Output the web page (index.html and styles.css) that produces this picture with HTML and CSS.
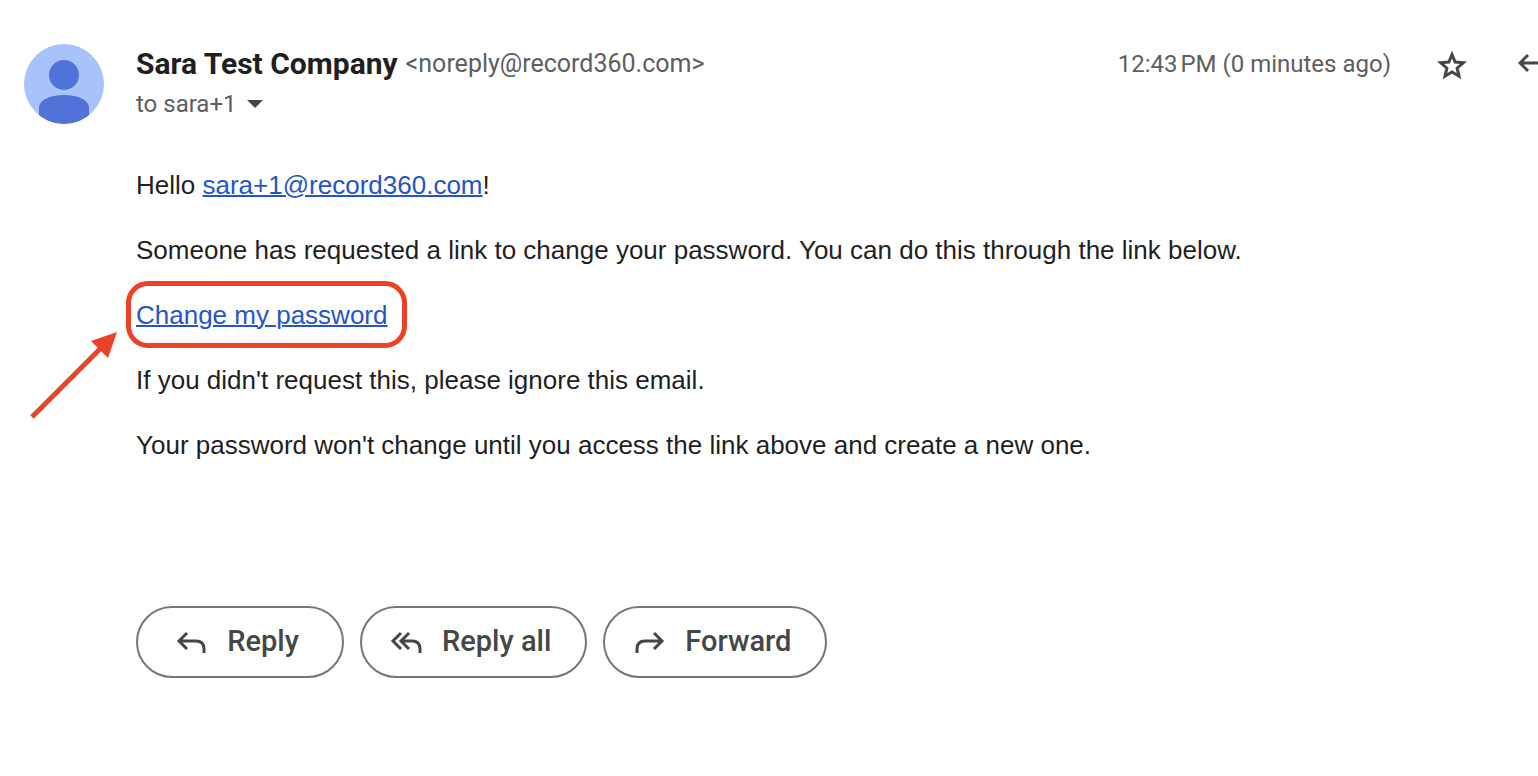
FILE: index.html
```html
<!DOCTYPE html>
<html lang="en">
<head>
<meta charset="UTF-8" />
<meta name="viewport" content="width=device-width, initial-scale=1" />
<title>Change your password</title>
<link rel="stylesheet" href="styles.css">
</head>
<body>
  <article class="message">
    <header class="message-header">
      <svg class="avatar" viewBox="0 0 80 80" aria-hidden="true">
        <clipPath id="avatarClip"><circle cx="40" cy="40" r="40" /></clipPath>
        <g clip-path="url(#avatarClip)">
          <rect width="80" height="80" fill="#a8c3fb" />
          <circle cx="40" cy="31" r="15" fill="#4f73d9" />
          <path d="M15 80V64C15 55 28 51 40 51s25 4 25 13v16z" fill="#4f73d9" />
        </g>
      </svg>
      <div class="sender">
        <div class="sender-line">
          <span class="sender-name">Sara Test Company</span>
          <span class="sender-email">&lt;noreply@record360.com&gt;</span>
        </div>
        <button class="recipient" type="button">
          to sara+1
          <svg class="caret" viewBox="0 0 16 8" aria-hidden="true"><path d="M0 0h16L8 8z" fill="currentColor" /></svg>
        </button>
      </div>
      <div class="meta">
        <time class="time">12:43&#8239;PM (0 minutes ago)</time>
        <button class="icon-btn" type="button" aria-label="Star">
          <svg class="icon" viewBox="0 0 36 36"><path fill="none" stroke="currentColor" stroke-width="3" d="M18 6.500L21.100 14.100L29.300 14.800L23.100 20.200L25 28.200L18 24L11 28.200L12.900 20.200L6.700 14.800L14.900 14.100Z" /></svg>
        </button>
        <button class="icon-btn" type="button" aria-label="Reply">
          <svg class="icon" viewBox="0 0 36 36" fill="none" stroke="currentColor" stroke-width="3"><path d="M10 7l-8 8 8 8M2 15h22q7 0 7 7v6" /></svg>
        </button>
      </div>
    </header>

    <div class="message-body">
      <p>Hello <a href="mailto:sara+1@record360.com">sara+1@record360.com</a>!</p>
      <p>Someone has requested a link to change your password. You can do this through the link below.</p>
      <p>
        <span class="highlight">
          <a href="#">Change my password</a>
          <svg class="pointer" viewBox="0 0 88 88" aria-hidden="true">
            <path d="M2 86L72 16" stroke="#eb4127" stroke-width="5" />
            <path d="M87 1L61 10l17 17z" fill="#eb4127" />
          </svg>
        </span>
      </p>
      <p>If you didn't request this, please ignore this email.</p>
      <p>Your password won't change until you access the link above and create a new one.</p>
    </div>

    <footer class="actions">
      <button class="action" type="button">
        <svg class="action-icon" viewBox="0 0 32 32"><path d="M12 7l-8 8 8 8M4 15h17q8 0 8 8v4" /></svg>
        Reply
      </button>
      <button class="action" type="button">
        <svg class="action-icon" viewBox="0 0 32 32"><path d="M11 7l-8 8 8 8M19 7l-8 8 8 8M11 15h11q8 0 8 8v4" /></svg>
        Reply all
      </button>
      <button class="action" type="button">
        <svg class="action-icon" viewBox="0 0 32 32"><path d="M21 7l8 8-8 8M29 15H12q-8 0-8 8v4" /></svg>
        Forward
      </button>
    </footer>
  </article>
</body>
</html>
```

FILE: styles.css
```css
* {
  box-sizing: border-box;
}
body {
  margin: 0;
  background: #fff;
  color: #1f1f1f;
  font-family: "Liberation Sans", Arial, sans-serif;
  font-size: 26px;
  line-height: 39px;
}
button {
  border: none;
  padding: 0;
  background: none;
  color: #444746;
  font: inherit;
  cursor: pointer;
}
a {
  color: #2455c8;
  text-decoration-thickness: 2px;
}
.message {
  padding: 44px 0 40px 24px;
  overflow: hidden;
}
.message-header {
  display: flex;
  align-items: flex-start;
  gap: 32px;
  font-family: Roboto, sans-serif;
  font-size: 24px;
  line-height: 40px;
  color: #5e5e5e;
}
.avatar {
  width: 80px;
  height: 80px;
  flex: none;
}
.sender {
  flex: 1;
  min-width: 0;
}
.sender-line {
  display: flex;
  align-items: center;
  gap: 8px;
  height: 40px;
}
.sender-name {
  color: #1f1f1f;
  font-size: 30px;
  font-weight: 700;
}
.sender-email {
  font-size: 25px;
}
.recipient {
  display: flex;
  align-items: center;
  gap: 10px;
  color: #5e5e5e;
}
.caret {
  width: 16px;
  height: 8px;
  color: #444746;
}
.sender-line,
.recipient,
.meta {
  white-space: nowrap;
}
/* the last button runs past the right edge */
.meta {
  display: flex;
  align-items: flex-start;
  margin-right: -16px;
}
.time {
  margin-right: 43px;
}
.icon-btn {
  display: flex;
  height: 44px;
  align-items: center;
}
.icon-btn + .icon-btn {
  margin-left: 48px;
}
.icon {
  width: 36px;
  height: 36px;
}

.message-body {
  margin-top: 42px;
  padding-left: 112px;
}
.message-body p {
  margin: 0 0 26px;
}
.highlight {
  position: relative;
}
.highlight::before {
  content: "";
  position: absolute;
  inset: -19px -20px -18px -10px;
  border: 5px solid #eb4127;
  border-radius: 22px;
  pointer-events: none;
}
.pointer {
  position: absolute;
  top: 31px;
  right: 100%;
  width: 88px;
  height: 88px;
  margin-right: 18px;
}

.actions {
  display: flex;
  flex-wrap: wrap;
  gap: 16px;
  margin-top: 141px;
  padding-left: 112px;
}
.action {
  display: flex;
  align-items: center;
  justify-content: center;
  gap: 20px;
  min-width: 208px;
  height: 72px;
  padding: 0 34px 2px 28px;
  border: 2px solid #747775;
  border-radius: 36px;
  font-family: Roboto, sans-serif;
  font-size: 29px;
  font-weight: 500;
}
.action-icon {
  width: 32px;
  height: 32px;
  margin-top: 2px;
  fill: none;
  stroke: currentColor;
  stroke-width: 3;
}
```
